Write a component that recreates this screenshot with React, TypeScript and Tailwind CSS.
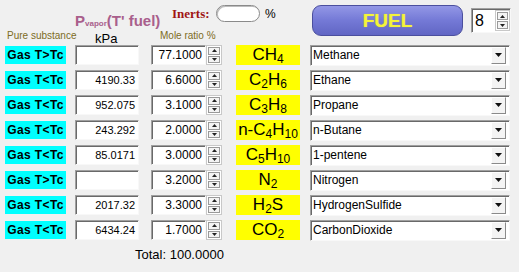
import React from 'react';

interface Row {
  state: string;
  pvap: string;
  mole: string;
  formula: React.ReactNode;
  name: string;
}

const Sub = ({ children }: { children: React.ReactNode }) => (
  <span className="text-[12px] relative top-[3px] leading-none">{children}</span>
);

const rows: Row[] = [
  { state: 'Gas T>Tc', pvap: '', mole: '77.1000', formula: <>CH<Sub>4</Sub></>, name: 'Methane' },
  { state: 'Gas T<Tc', pvap: '4190.33', mole: '6.6000', formula: <>C<Sub>2</Sub>H<Sub>6</Sub></>, name: 'Ethane' },
  { state: 'Gas T<Tc', pvap: '952.075', mole: '3.1000', formula: <>C<Sub>3</Sub>H<Sub>8</Sub></>, name: 'Propane' },
  { state: 'Gas T<Tc', pvap: '243.292', mole: '2.0000', formula: <>n-C<Sub>4</Sub>H<Sub>10</Sub></>, name: 'n-Butane' },
  { state: 'Gas T<Tc', pvap: '85.0171', mole: '3.0000', formula: <>C<Sub>5</Sub>H<Sub>10</Sub></>, name: '1-pentene' },
  { state: 'Gas T>Tc', pvap: '', mole: '3.2000', formula: <>N<Sub>2</Sub></>, name: 'Nitrogen' },
  { state: 'Gas T<Tc', pvap: '2017.32', mole: '3.3000', formula: <>H<Sub>2</Sub>S</>, name: 'HydrogenSulfide' },
  { state: 'Gas T<Tc', pvap: '6434.24', mole: '1.7000', formula: <>CO<Sub>2</Sub></>, name: 'CarbonDioxide' },
];

const sunken =
  'bg-white border border-t-[#a0a0a0] border-l-[#a0a0a0] border-r-[#f8f8f8] border-b-[#f8f8f8] shadow-[inset_1px_1px_0_#696969]';

function Spinner({ w = 'w-[16px]', h = 'h-[20px]' }: { w?: string; h?: string }) {
  return (
    <div className={`${w} ${h} flex flex-col bg-white border border-[#c8c8c8] p-[1px] gap-[1px]`}>
      {[0, 1].map((i) => (
        <div
          key={i}
          className="flex-1 flex items-center justify-center bg-[#f4f4f4] border border-[#9a9a9a]"
        >
          <svg width="5" height="3" viewBox="0 0 5 3">
            {i === 0 ? <path d="M2.5 0 L5 3 L0 3 Z" fill="#222" /> : <path d="M0 0 L5 0 L2.5 3 Z" fill="#222" />}
          </svg>
        </div>
      ))}
    </div>
  );
}

function Combo({ value }: { value: string }) {
  return (
    <div className={`w-[200px] h-[21px] flex items-center ${sunken}`}>
      <span className="flex-1 pl-[2px] text-[12px] text-black leading-none">{value}</span>
      <div className="w-[15px] h-[17px] mr-[3px] flex items-center justify-center bg-[#f4f4f4] border border-t-white border-l-white border-r-[#8a8a8a] border-b-[#8a8a8a]">
        <svg width="7" height="4" viewBox="0 0 7 4">
          <path d="M0 0 L7 0 L3.5 4 Z" fill="#111" />
        </svg>
      </div>
    </div>
  );
}

export default function App() {
  return (
    <div className="w-[519px] h-[272px] bg-[#f0f0f0] overflow-hidden font-['Liberation_Sans',Arial,sans-serif] text-black">
      {/* header */}
      <div className="flex h-[45px]">
        <div className="w-[310px] flex flex-col">
          <div className="h-[27px] flex items-start pt-[5px]">
            <div className="ml-[75px] w-[97px] mt-[8px] text-[15px] font-bold text-[#a95f8c] leading-none whitespace-nowrap">
              P<span className="text-[8px] font-bold">vapor</span>(T' fuel)
            </div>
            <span className="w-[44px] mt-[2px] text-[13px] font-bold text-[#a01414] leading-none font-['Liberation_Serif',serif]">
              Inerts:
            </span>
            <div className="w-[44px] h-[17px] rounded-full bg-white border border-[#8a8a8a] shadow-[inset_1px_1px_0_#bdbdbd]" />
            <span className="ml-[5px] mt-[3px] text-[12px] leading-none">%</span>
          </div>
          <div className="h-[18px] flex items-center">
            <span className="ml-[7px] w-[88px] text-[10px] text-[#7d6c24] leading-none whitespace-nowrap">
              Pure substance
            </span>
            <span className="w-[65px] mt-[4px] text-[13px] leading-none">kPa</span>
            <span className="text-[10px] text-[#7d6c24] leading-none whitespace-nowrap">Mole ratio %</span>
          </div>
        </div>
        <div className="flex items-start pt-[5px]">
          <div className="ml-[2px] w-[151px] h-[31px] rounded-[9px] border border-[#4b4f9e] bg-gradient-to-b from-[#9397e6] via-[#7479d6] to-[#6166c4] flex items-center justify-center">
            <span className="text-[19px] font-bold text-[#f4f43a] leading-none [text-shadow:0_0_1px_#c9c94a]">FUEL</span>
          </div>
          <div className={`ml-[8px] mt-[3px] w-[40px] h-[25px] flex items-center ${sunken}`}>
            <span className="flex-1 pl-[3px] text-[16px] leading-none">8</span>
            <Spinner w="w-[15px]" h="h-[21px]" />
          </div>
        </div>
      </div>

      {/* rows */}
      <div className="flex flex-col gap-[5px]">
        {rows.map((r, i) => (
          <div key={i} className="h-[20px] flex items-center">
            <div className="ml-[5px] w-[61px] h-[18px] bg-[#00ffff] flex items-center justify-center text-[12px] font-bold tracking-[0.4px] leading-none">
              {r.state}
            </div>
            <div className={`ml-[9px] w-[64px] h-[20px] flex items-center justify-end pr-[3px] text-[11px] leading-none ${sunken}`}>
              {r.pvap}
            </div>
            <div className={`ml-[12px] w-[55px] h-[20px] flex items-center justify-end pr-[3px] text-[12px] leading-none ${sunken}`}>
              {r.mole}
            </div>
            <Spinner />
            <div className="ml-[14px] w-[64px] h-[20px] bg-[#ffff00] flex items-center justify-center text-[17px] leading-none whitespace-nowrap">
              <span className="relative top-[-1px]">{r.formula}</span>
            </div>
            <div className="ml-[10px]">
              <Combo value={r.name} />
            </div>
          </div>
        ))}
      </div>

      <div className="mt-[8px] pl-[135px] text-[13px] leading-none">Total: 100.0000</div>
    </div>
  );
}
